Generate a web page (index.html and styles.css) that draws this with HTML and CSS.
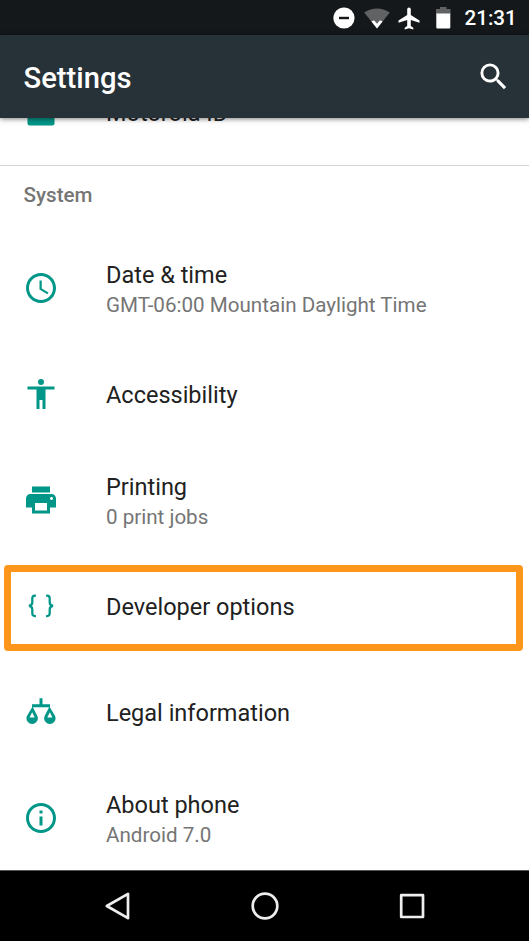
FILE: index.html
```html
<!DOCTYPE html>
<html lang="en">
<head>
<meta charset="utf-8">
<title>Settings</title>
<link rel="stylesheet" href="styles.css">
</head>
<body>
<div class="phone">
  <div class="status">
    <svg class="s-dnd" width="22" height="22" viewBox="0 0 22 22"><circle cx="11" cy="11" r="10.6" fill="#fff"/><path d="M6 11h10" stroke="#14181a" stroke-width="2.4"/></svg>
    <svg class="s-wifi" width="26" height="21" viewBox="0 0 26 21"><path d="M13 20.5L.2 4.5Q13-3.5 25.8 4.5z" fill="#606263"/><path d="M13 20.5L7.4 13.6Q9 12.2 10.3 12.4L13 15.8l2.700-3.400Q17 12.200 18.600 13.600z" fill="#fff"/></svg>
    <svg class="s-plane" width="22" height="23" viewBox="0 0 22 23"><path d="M21.500 15.700v-2.200L12.800 8V2.200a1.800 1.800 0 0 0-3.600 0V8L.5 13.500v2.200l8.700-2.700v6L6.700 20.800v1.700l4.300-1.200 4.300 1.200v-1.700L12.800 19v-6z" fill="#fff"/></svg>
    <svg class="s-battery" width="15" height="22" viewBox="0 0 15 22"><path d="M4 0h6.500v2H14.500v5H0V2h4z" fill="#606263"/><path d="M.3 6.500h14V20.500q0 1-1 1h-12q-1 0-1-1z" fill="#fff"/></svg>
    <span class="time">21:31</span>
  </div>
  <header class="appbar">
    <h1>Settings</h1>
    <svg class="search" viewBox="0 0 24 24"><path d="M15.500 14h-.79l-.28-.27A6.470 6.470 0 0 0 16 9.500 6.500 6.500 0 1 0 9.500 16c1.610 0 3.090-.59 4.230-1.570l.27.280v.79l5 4.990L20.490 19l-4.990-5zm-6 0C7.010 14 5 11.990 5 9.500S7.010 5 9.500 5 14 7.010 14 9.500 11.990 14 9.500 14z"/></svg>
  </header>
  <main class="list">
    <div class="row partial">
      <svg class="icon" viewBox="0 0 24 24"><rect x="3" y="3" width="18" height="18" rx="1.500"/></svg>
      <div class="text"><div class="title">Motorola ID</div></div>
    </div>
    <h2>System</h2>
    <div class="row">
      <svg class="icon" viewBox="0 0 24 24"><path d="M11.990 2C6.470 2 2 6.480 2 12s4.470 10 9.990 10C17.520 22 22 17.520 22 12S17.520 2 11.990 2zM12 20c-4.420 0-8-3.580-8-8s3.580-8 8-8 8 3.580 8 8-3.580 8-8 8z"/><path d="M12.500 7H11v6l5.250 3.150.75-1.230-4.500-2.670z"/></svg>
      <div class="text"><div class="title">Date &amp; time</div><div class="summary">GMT-06:00 Mountain Daylight Time</div></div>
    </div>
    <div class="row">
      <svg class="icon" viewBox="0 0 24 24"><path d="M12 2a2 2 0 1 1 0 4 2 2 0 0 1 0-4zm9 7h-6v13h-2v-6h-2v6H9V9H3V7h18z"/></svg>
      <div class="text"><div class="title">Accessibility</div></div>
    </div>
    <div class="row">
      <svg class="icon" viewBox="0 0 24 24"><path d="M19 8H5c-1.660 0-3 1.340-3 3v6h4v4h12v-4h4v-6c0-1.660-1.340-3-3-3zm-3 11H8v-5h8v5zm3-7c-.55 0-1-.45-1-1s.45-1 1-1 1 .45 1 1-.45 1-1 1zm-1-9H6v4h12V3z"/></svg>
      <div class="text"><div class="title">Printing</div><div class="summary">0 print jobs</div></div>
    </div>
    <div class="row selected">
      <svg class="icon" viewBox="0 0 24 24"><g class="brace"><path d="M8.600 5.100H7.900Q6.200 5.100 6.200 6.900V9.500Q6.200 11.700 3.900 11.900 6.200 12.100 6.200 14.300V16.900Q6.200 18.700 7.900 18.700H8.600"/><path d="M15.400 5.100H16.100Q17.800 5.100 17.800 6.900V9.500Q17.800 11.700 20.100 11.900 17.800 12.100 17.800 14.300V16.900Q17.800 18.700 16.100 18.700H15.400"/></g></svg>
      <div class="text"><div class="title">Developer options</div></div>
    </div>
    <div class="row">
      <svg class="icon" viewBox="0 0 24 24"><path fill-rule="evenodd" d="M11 2.800h2V6.800h5v2h-.1l3.400 5.700a3.800 3.800 0 1 1-6.800 0L17.400 8.800H6.600l2.900 5.700a3.800 3.800 0 1 1-6.800 0L6.100 8.800H6v-2h5zM6.100 12.200L4.400 15.600h3.400zM17.900 12.200l-1.700 3.400h3.400z"/></svg>
      <div class="text"><div class="title">Legal information</div></div>
    </div>
    <div class="row">
      <svg class="icon" viewBox="0 0 24 24"><path d="M11 17h2v-6h-2v6zm1-15C6.480 2 2 6.480 2 12s4.480 10 10 10 10-4.480 10-10S17.520 2 12 2zm0 18c-4.410 0-8-3.590-8-8s3.590-8 8-8 8 3.590 8 8-3.590 8-8 8zM11 9h2V7h-2v2z"/></svg>
      <div class="text"><div class="title">About phone</div><div class="summary">Android 7.0</div></div>
    </div>
  </main>
  <nav class="navbar">
    <svg width="30" height="30" viewBox="0 0 30 30"><path d="M25 2.800v24.400L3.800 15z"/></svg>
    <svg width="30" height="30" viewBox="0 0 30 30"><circle cx="15" cy="15" r="12.300"/></svg>
    <svg width="30" height="30" viewBox="0 0 30 30"><rect x="4.200" y="4.200" width="21.800" height="21.800"/></svg>
  </nav>
</div>
</body>
</html>
```
FILE: styles.css
```css
*, *::after { box-sizing: border-box; }
body { margin: 0; font-family: Roboto, sans-serif; background: #fff; }
h1, h2 { margin: 0; font-weight: 500; }
svg { display: block; flex: none; }
.phone { width: 529px; height: 941px; display: flex; flex-direction: column; overflow: hidden; }

.status { height: 35px; flex: none; background: #14181a; display: flex; align-items: center; padding: 1px 12px 0 332.500px; }
.s-wifi { margin-left: 9.500px; }
.s-plane { margin-left: 7.500px; }
.s-battery { margin-left: 16px; }
.time { color: #fff; font-size: 20.600px; line-height: 24px; font-weight: 500; margin-left: 14px; white-space: nowrap; }

.appbar { height: 83px; flex: none; background: #273238; display: flex; align-items: center; justify-content: space-between; padding: 0 18px 0 23.500px; box-shadow: 0 1px 5px rgba(0, 0, 0, .5); position: relative; z-index: 1; }
.appbar h1 { color: #fff; font-size: 29.200px; line-height: 36px; padding-top: 2px; }
.search { width: 35.300px; height: 35.300px; fill: #fff; }

.list { flex: 1; min-height: 0; overflow: hidden; }
.row { height: 106px; display: flex; align-items: center; padding-left: 23px; }
.partial { margin-top: -59px; height: 107px; border-bottom: 1px solid #d4d4d4; }
.icon { width: 36px; height: 36px; fill: #009688; margin-right: 47px; }
.brace { fill: none; stroke: #009688; stroke-width: 1.500; }
.text { padding-top: 2px; white-space: nowrap; }
.title { color: #212121; font-size: 23.500px; line-height: 30px; }
.summary { color: #757575; font-size: 20.600px; line-height: 26px; margin-top: 2px; }
.list h2 { height: 69px; padding: 17px 0 0 23.500px; color: #757575; font-size: 20.600px; line-height: 24px; }
.selected { position: relative; }
.selected::after { content: ""; position: absolute; left: 4px; right: 6px; top: 12px; height: 86px; border: 7px solid #ff961c; border-radius: 4px; }

.navbar { height: 71px; flex: none; background: #000; border-top: 1px solid #555; display: flex; align-items: center; justify-content: center; gap: 117px; }
.navbar svg { fill: none; stroke: #eee; stroke-width: 2.700; stroke-linejoin: round; }
```
